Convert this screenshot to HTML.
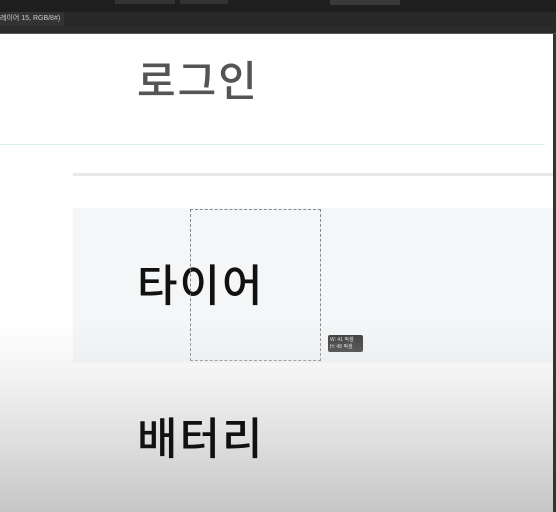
<!DOCTYPE html>
<html><head><meta charset="utf-8"><style>
*{margin:0;padding:0;box-sizing:border-box}
body{width:556px;height:512px;overflow:hidden;position:relative;background:#fff;font-family:"Liberation Sans","Noto Sans CJK KR",sans-serif}
.a{position:absolute}
.k{font-family:"Noto Sans CJK KR",sans-serif;font-weight:500;line-height:1;letter-spacing:2px}
</style></head><body>
<div class="a" style="left:0;top:0;width:556px;height:12px;background:#1e1e1e"></div>
<div class="a" style="left:115px;top:0;width:60px;height:4px;background:#333"></div>
<div class="a" style="left:180px;top:0;width:48px;height:4px;background:#333"></div>
<div class="a" style="left:330px;top:0;width:70px;height:5px;background:#3a3a3a"></div>
<div class="a" style="left:0;top:12px;width:556px;height:14px;background:#282828"></div>
<div class="a" style="left:0;top:12px;width:64px;height:14px;background:#333;color:#ccc;font-size:7px;line-height:14px">레이어 15, RGB/8#) ×</div>
<div class="a" style="left:0;top:26px;width:556px;height:8px;background:#2b2b2b;border-bottom:1px solid #555"></div>
<div class="a" style="left:0;top:34px;width:553px;height:478px;background:#fff"></div>
<div class="a" style="left:553px;top:34px;width:3px;height:478px;background:#333"></div>
<div class="a k" style="left:137px;top:58px;font-size:42px;color:#555">로그인</div>
<div class="a" style="left:0;top:144px;width:545px;height:1px;background:#d2f2f2"></div>
<div class="a" style="left:73px;top:173px;width:480px;height:3px;background:#e8e8e8"></div>
<div class="a" style="left:73px;top:208px;width:480px;height:155px;background:#f4f6f8"></div>
<div class="a k" style="left:137px;top:260px;font-size:44px;color:#111">타이어</div>
<div class="a" style="left:190px;top:209px;width:131px;height:152px;border:1px dashed #888"></div>
<div class="a" style="left:328px;top:335px;width:35px;height:17px;background:#333;border-radius:2px;color:#ddd;font-size:5px;line-height:7px;padding:2px">W: 41 픽셀<br>H: 48 픽셀</div>
<div class="a" style="left:0;top:320px;width:553px;height:192px;background:linear-gradient(rgba(200,200,200,0) 0,rgba(225,225,225,.35) 50px,rgba(215,215,215,.8) 120px,rgba(198,198,198,1) 192px)"></div>
<div class="a k" style="left:137px;top:413px;font-size:44px;color:#111">배터리</div>
</body></html>
